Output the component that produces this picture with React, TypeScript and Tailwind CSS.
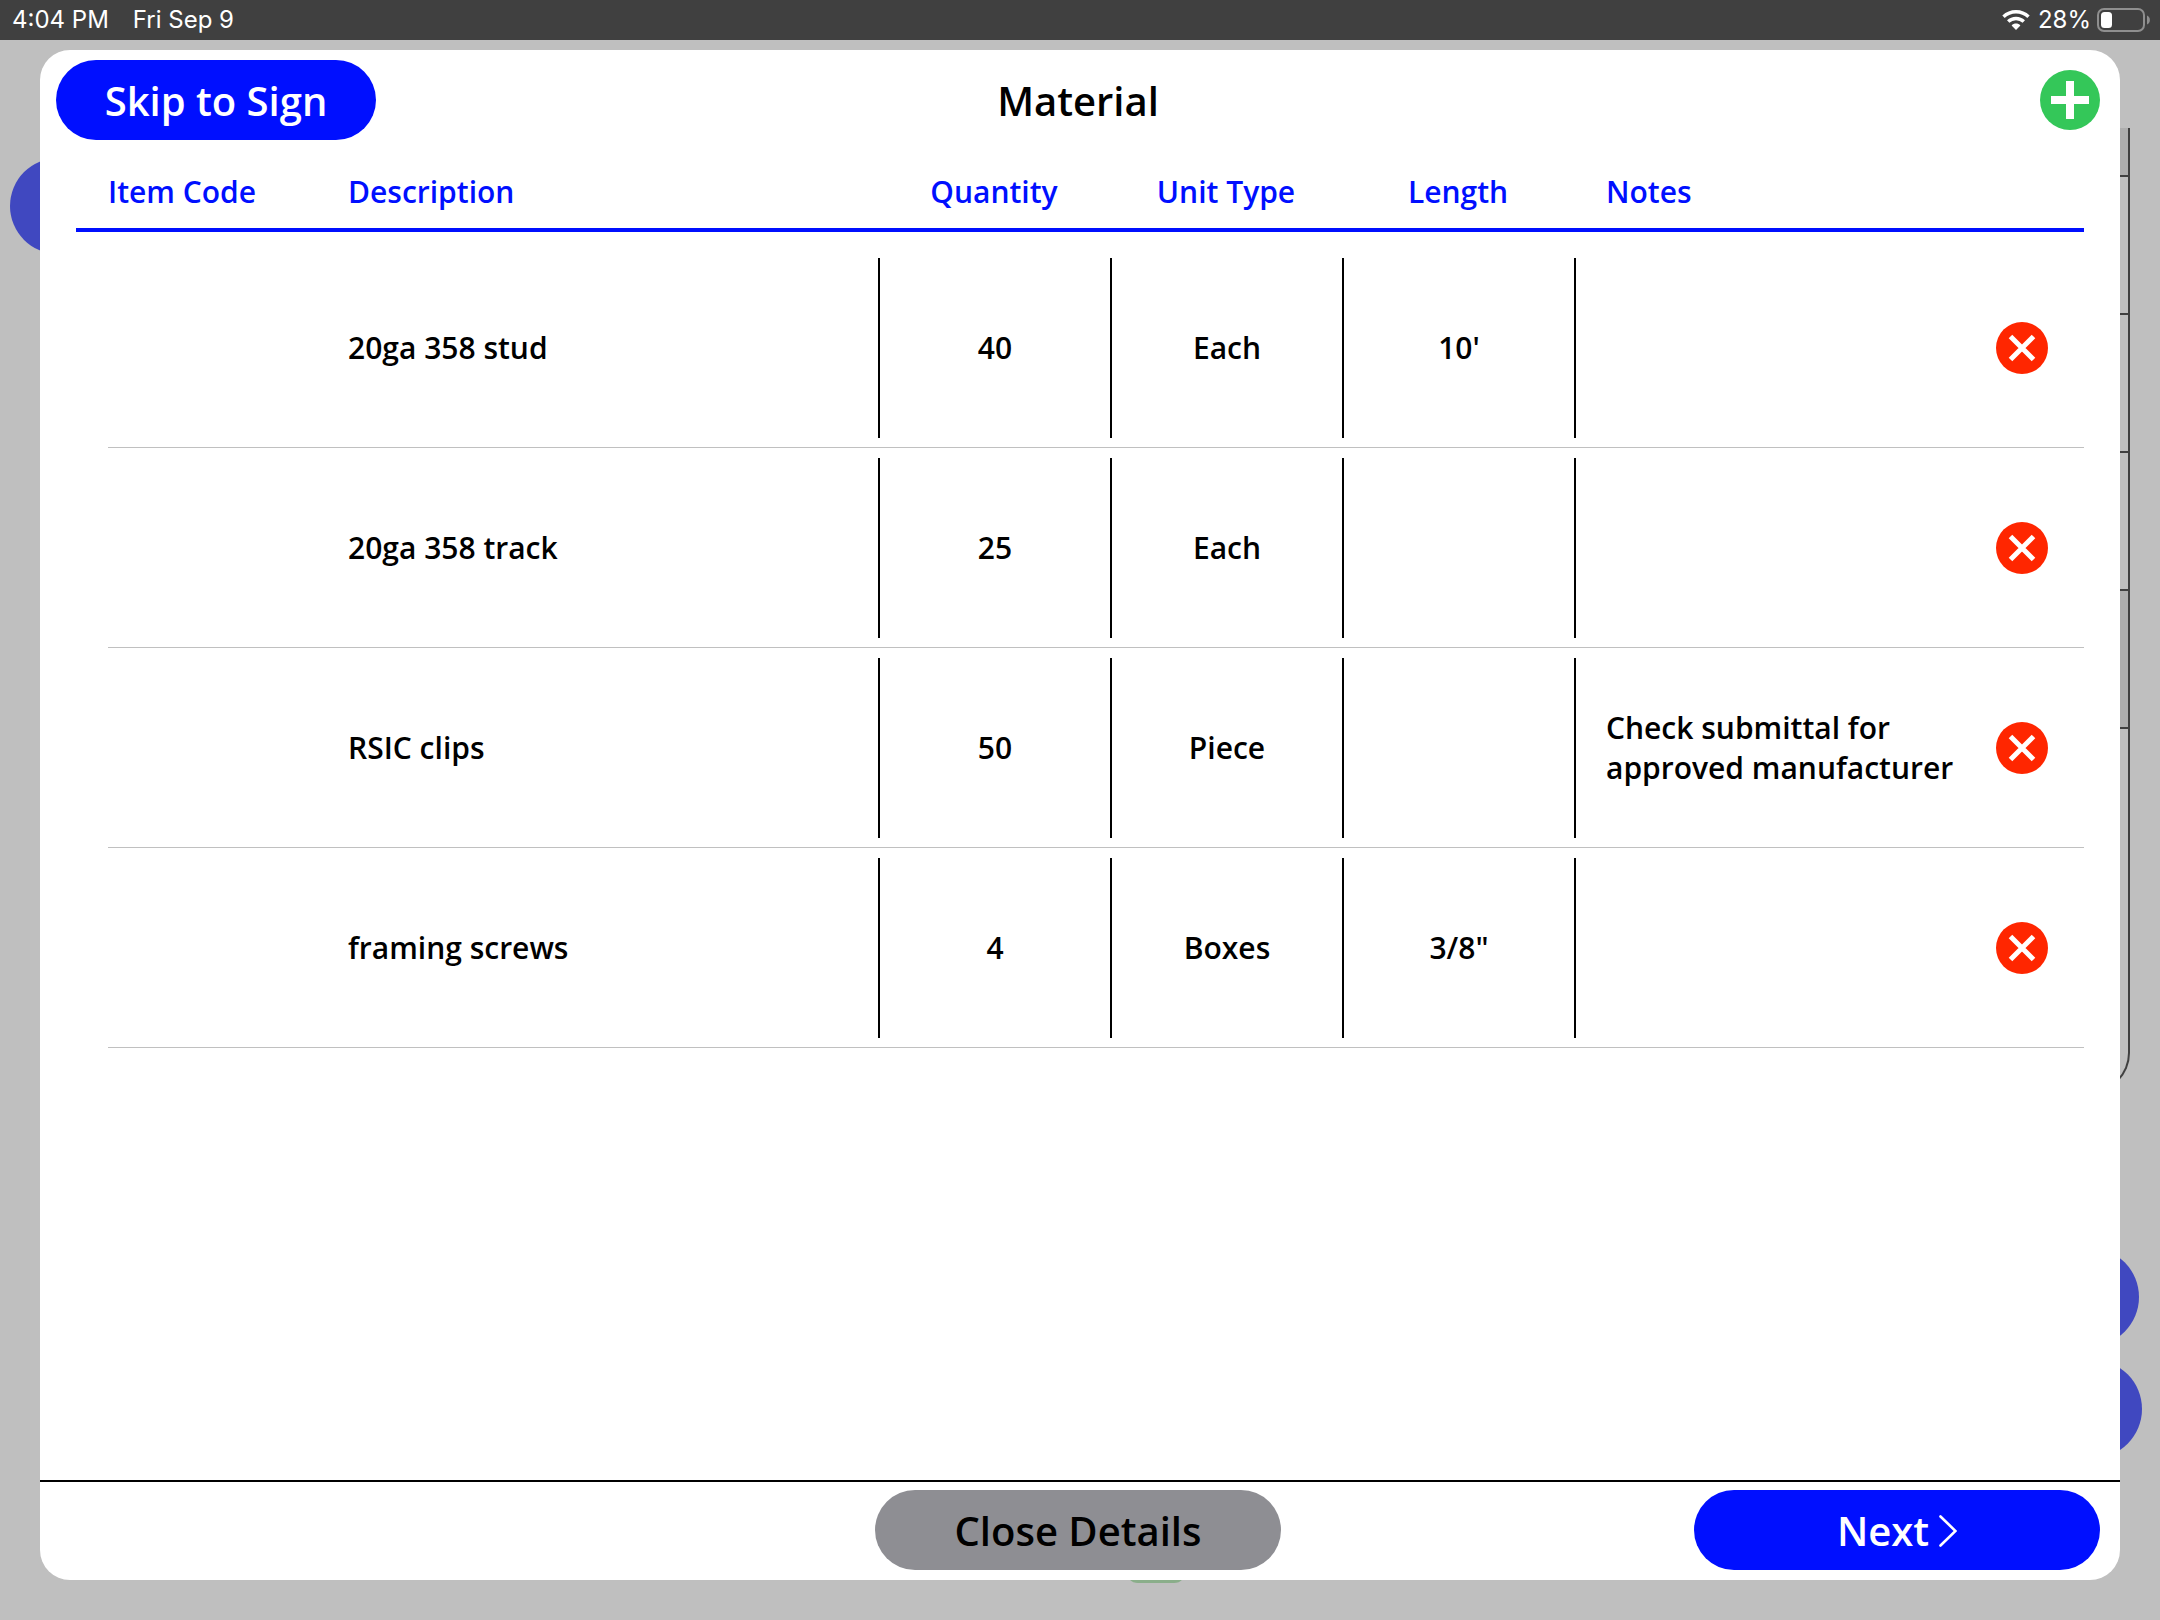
import { useState } from 'react';

type Material = {
    id: number;
    code: string;
    description: string;
    quantity: string;
    unit: string;
    length: string;
    notes: string;
};

const initialMaterials: Material[] = [
    { id: 1, code: '', description: '20ga 358 stud', quantity: '40', unit: 'Each', length: "10'", notes: '' },
    { id: 2, code: '', description: '20ga 358 track', quantity: '25', unit: 'Each', length: '', notes: '' },
    { id: 3, code: '', description: 'RSIC clips', quantity: '50', unit: 'Piece', length: '', notes: 'Check submittal for approved manufacturer' },
    { id: 4, code: '', description: 'framing screws', quantity: '4', unit: 'Boxes', length: '3/8"', notes: '' },
];

function StatusBar() {
    return (
        <header className="relative flex h-10 items-center justify-between bg-[#404040] pl-3 pr-2.5 font-['Inter',sans-serif] text-2xl font-normal text-white">
            <div className="flex gap-6">
                <span>4:04 PM</span>
                <span>Fri Sep 9</span>
            </div>
            <div className="flex items-center">
                <svg className="mr-2 h-5 w-7" viewBox="0 0 28 20" fill="none" aria-hidden="true">
                    <path d="M1.5 6.8C8.4 .1 19.6 .1 26.5 6.8" stroke="white" strokeWidth="3.4" />
                    <path d="M6.2 11.6C10.5 7.5 17.5 7.5 21.8 11.6" stroke="white" strokeWidth="3.4" />
                    <path d="M9.6 15.4C12 13 16 13 18.4 15.4L14 19.9Z" fill="white" />
                </svg>
                <span className="mr-1.5">28%</span>
                <svg className="h-6 w-[53px]" viewBox="0 0 53 24" fill="none" aria-hidden="true">
                    <rect x="1" y="1" width="46" height="22" rx="6" stroke="#8f8f8f" strokeWidth="2" />
                    <rect x="4" y="4" width="11" height="16" rx="3.5" fill="white" />
                    <path d="M50 7.5C53.8 9 53.8 15 50 16.5Z" fill="#8f8f8f" />
                </svg>
            </div>
        </header>
    );
}

// dimmed page that stays visible around the edges of the dialog
function Backdrop() {
    return (
        <div className="absolute inset-0 overflow-hidden" aria-hidden="true">
            <div className="absolute left-2.5 top-[158px] h-24 w-80 rounded-full bg-[#4048c0]" />
            <div className="absolute right-[30px] top-32 h-[965px] w-80 overflow-hidden rounded-br-[40px] border-b-2 border-r-2 border-[#404040]">
                <div className="h-[49px] border-b-2 border-[#404040] bg-[#adadad]" />
                <div className="h-[138px] border-b-2 border-[#404040]" />
                <div className="h-[138px] border-b-2 border-[#404040]" />
                <div className="h-[138px] border-b-2 border-[#404040]" />
                <div className="h-[138px] border-b-2 border-[#404040] bg-[#adadad]" />
            </div>
            <div className="absolute right-[21px] top-[1248px] h-[98px] w-80 rounded-full bg-[#4048c0]" />
            <div className="absolute right-[18px] top-[1360px] h-[98px] w-80 rounded-full bg-[#4048c0]" />
            <div className="absolute left-[1126px] top-[1523px] h-[60px] w-[60px] rounded-xl bg-[#8aae8a]" />
        </div>
    );
}

function Cell({ children, divider, center }: { children?: React.ReactNode; divider?: boolean; center?: boolean }) {
    return (
        <div className="h-50 border-b border-[#c0c0c0] pb-[9px] pt-2.5">
            <div className={`flex h-full items-center ${divider ? 'border-l-2 border-black' : ''} ${center ? 'justify-center' : ''} ${divider && !center ? 'pl-[30px]' : ''}`}>
                {children}
            </div>
        </div>
    );
}

export default function App() {
    const [materials, setMaterials] = useState(initialMaterials);

    const addMaterial = () => {
        setMaterials([...materials, { id: Date.now(), code: '', description: '', quantity: '', unit: '', length: '', notes: '' }]);
    };

    const removeMaterial = (id: number) => {
        setMaterials(materials.filter((material) => material.id !== id));
    };

    return (
        <div className="relative flex min-h-screen flex-col bg-[#bfbfbf] font-['Open_Sans','Noto_Sans',sans-serif] font-semibold text-black">
            <Backdrop />
            <StatusBar />
            <main className="relative flex flex-1 flex-col px-10 pb-10 pt-2.5">
                <section className="flex flex-1 flex-col rounded-[30px] bg-white" aria-labelledby="dialog-title">
                    <div className="flex items-center pb-3.5 pl-4 pr-5 pt-2.5">
                        <div className="flex-1">
                            <button className="h-20 w-80 rounded-full bg-[#000fff] pt-0.5 text-[40px] text-white">Skip to Sign</button>
                        </div>
                        <h1 id="dialog-title" className="pt-0.5 text-[40px] leading-none">Material</h1>
                        <div className="flex flex-1 justify-end">
                            <button onClick={addMaterial} aria-label="Add material">
                                <svg className="h-15 w-15" viewBox="0 0 60 60">
                                    <circle cx="30" cy="30" r="30" fill="#34c759" />
                                    <path d="M30 11v38M11 30h38" stroke="white" strokeWidth="8" />
                                </svg>
                            </button>
                        </div>
                    </div>

                    <div className="flex-1 pl-9 pr-9">
                        <table className="w-full table-fixed border-separate border-spacing-0 text-3xl leading-10">
                            <colgroup>
                                <col className="w-[272px]" />
                                <col />
                                <col className="w-[232px]" />
                                <col className="w-[232px]" />
                                <col className="w-[232px]" />
                                <col className="w-[386px]" />
                                <col className="w-[124px]" />
                            </colgroup>
                            <thead className="text-[#000fff]">
                                <tr>
                                    <th className="p-0 pb-4 text-left font-semibold"><div className="flex h-[78px] items-center border-b-4 pl-8 pt-0.5">Item Code</div></th>
                                    <th className="p-0 pb-4 text-left font-semibold"><div className="flex h-[78px] items-center border-b-4 pt-0.5">Description</div></th>
                                    <th className="p-0 pb-4 font-semibold"><div className="flex h-[78px] items-center justify-center border-b-4 pt-0.5">Quantity</div></th>
                                    <th className="p-0 pb-4 font-semibold"><div className="flex h-[78px] items-center justify-center border-b-4 pt-0.5">Unit Type</div></th>
                                    <th className="p-0 pb-4 font-semibold"><div className="flex h-[78px] items-center justify-center border-b-4 pt-0.5">Length</div></th>
                                    <th className="p-0 pb-4 text-left font-semibold"><div className="flex h-[78px] items-center border-b-4 pl-8 pt-0.5">Notes</div></th>
                                    <td className="p-0 pb-4"><div className="h-[78px] border-b-4" /></td>
                                </tr>
                            </thead>
                            <tbody>
                                {materials.map((material) => (
                                    <tr key={material.id}>
                                        <td className="p-0 pl-8"><Cell>{material.code}</Cell></td>
                                        <td className="p-0"><Cell>{material.description}</Cell></td>
                                        <td className="p-0"><Cell divider center>{material.quantity}</Cell></td>
                                        <td className="p-0"><Cell divider center>{material.unit}</Cell></td>
                                        <td className="p-0"><Cell divider center>{material.length}</Cell></td>
                                        <td className="p-0"><Cell divider>{material.notes}</Cell></td>
                                        <td className="p-0">
                                            <Cell center>
                                                <button onClick={() => removeMaterial(material.id)} aria-label="Remove material">
                                                    <svg className="h-13 w-13" viewBox="0 0 52 52">
                                                        <circle cx="26" cy="26" r="26" fill="#ff2600" />
                                                        <path d="M14.5 14.5l23 23M37.5 14.5l-23 23" stroke="white" strokeWidth="5" />
                                                    </svg>
                                                </button>
                                            </Cell>
                                        </td>
                                    </tr>
                                ))}
                            </tbody>
                        </table>
                    </div>

                    <div className="flex items-center justify-between border-t-2 border-black pb-2.5 pl-4 pr-5 pt-2 text-[40px]">
                        <div className="w-[406px]" />
                        <button className="h-20 w-[406px] rounded-full bg-[#8e8e93] pt-0.5">Close Details</button>
                        <button className="flex h-20 w-[406px] items-center justify-center gap-2.5 rounded-full bg-[#000fff] pt-0.5 text-white">
                            Next
                            <svg className="h-8 w-[18px]" viewBox="0 0 18 32" fill="none" aria-hidden="true">
                                <path d="M1.5 1.5L16.5 16L1.5 30.5" stroke="white" strokeWidth="2.6" strokeLinecap="round" />
                            </svg>
                        </button>
                    </div>
                </section>
            </main>
        </div>
    );
}
